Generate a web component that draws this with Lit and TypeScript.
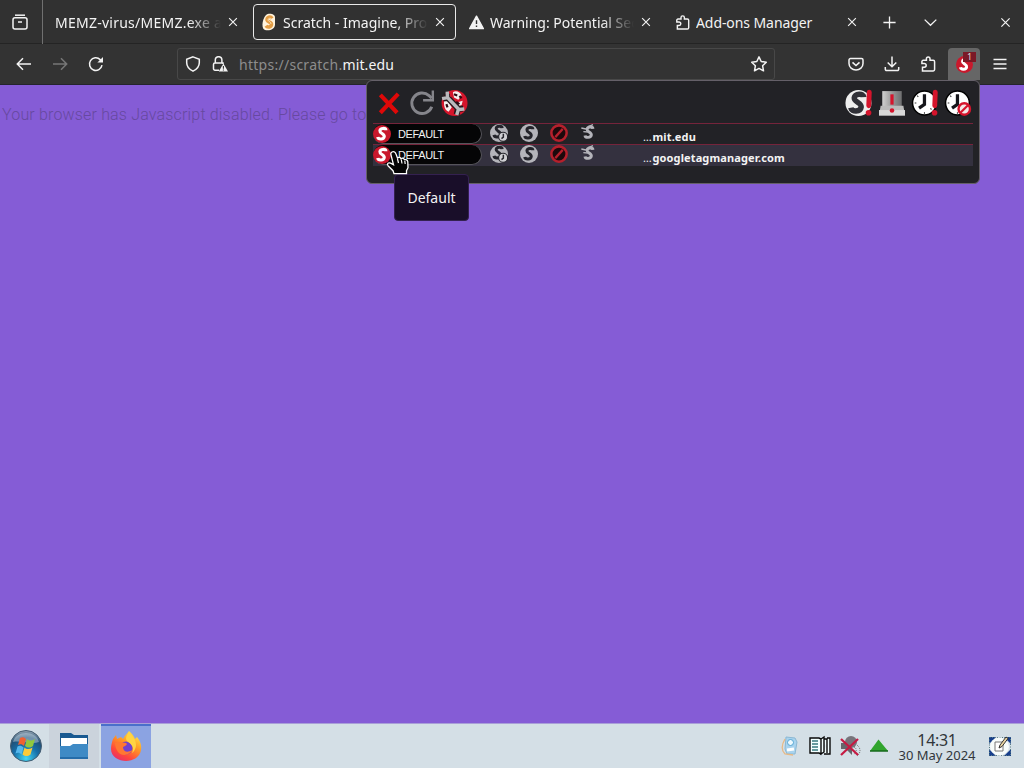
import { LitElement, html, svg, css } from "lit";
import { customElement, property } from "lit/decorators.js";
import { classMap } from "lit/directives/class-map.js";

// snake-like curve shared by all the script permission icons
const snake = "M17.2 7C17 3.600 9.800 3.800 9.200 7.600C8.700 11.200 15.600 11.500 15 15.500C14.400 19.600 7 19.800 6.300 16";

const icons = {
  close: svg`<path d="M3.6 3.6l8.8 8.8M12.4 3.6l-8.8 8.8" stroke-width="1.3" />`,
  plus: svg`<path d="M8 1.500v13M1.500 8h13" stroke-width="1.4" />`,
  chevron: svg`<path d="M1.800 4.900L8 11l6.200-6.100" stroke-width="1.4" />`,
  tabs: svg`<path d="M3 1.2h10" /><rect x="1" y="3.8" width="14" height="11.2" rx="2" /><path d="M6 8h4" />`,
  back: svg`<path d="M15 8H1.5M7 2.3L1.3 8 7 13.7" />`,
  forward: svg`<path d="M1 8h13.5M9 2.3L14.7 8 9 13.7" />`,
  reload: svg`<path d="M14 9.2A6.3 6.3 0 1 1 12.2 3.6L14 5.4" /><path d="M15 1v5.6H9.4z" fill="currentColor" stroke="none" />`,
  shield: svg`<path d="M8 .9l6.3 2.4v3.5c0 3.7-2.6 6.6-6.3 8.4-3.7-1.8-6.3-4.7-6.3-8.4V3.3z" />`,
  lock: svg`<path d="M7 14.2H3a1.500 1.500 0 0 1-1.500-1.500V8.500A1.500 1.500 0 0 1 3 7h8v1M3.300 7V4a3.300 3.300 0 0 1 6.600 0v3" /><path d="M11.4 7.500L16 15.600H6.800z" fill="currentColor" stroke="none" /><path d="M11.4 10v2.700M11.4 13.600v1" stroke="#313131" stroke-width="1.100" />`,
  star: svg`<path d="M8 .9l2.200 4.600 5.100.7-3.700 3.500.9 5.100L8 12.400l-4.500 2.400.9-5.100L.7 6.200l5.100-.7z" stroke-linejoin="round" />`,
  pocket: svg`<path d="M2.500 2.500h11a1.500 1.500 0 0 1 1.500 1.500v3.500a7 6.500 0 0 1-14 0V4a1.500 1.500 0 0 1 1.500-1.500z" /><path d="M4.500 6.300L8 9.500l3.500-3.200" stroke-width="1.600" />`,
  download: svg`<path d="M8 .5v10M3.700 6.500L8 10.800l4.300-4.300M1.300 11v2.200A1.300 1.300 0 0 0 2.600 14.500h10.800a1.300 1.300 0 0 0 1.300-1.300V11" />`,
  puzzle: svg`<path d="M2.500 14.900V11.200h1.800a1.900 1.900 0 0 0 0-3.800H1.900V5.600A1.300 1.300 0 0 1 3.200 4.300H6.400V2.700a1.800 1.800 0 0 1 3.600 0v1.600h3.200A1.400 1.400 0 0 1 14.600 5.700v7.800a1.400 1.400 0 0 1-1.400 1.400z" />`,
  menu: svg`<path d="M1.500 3.500h13M1.500 8h13M1.500 12.500h13" />`,
  warning: svg`<path d="M8 1.200L15.300 14.500H.7z" fill="currentColor" stroke-width="1.500" stroke-linejoin="round" /><path d="M8 5.500v4M8 11.200v1.500" stroke="#313131" stroke-width="1.500" />`,
};

const icon = (name: keyof typeof icons, extra = "") => html`
  <svg class="icon ${extra}" viewBox="0 0 16 16" fill="none" stroke="currentColor" stroke-width="1.5">
    ${icons[name]}
  </svg>
`;

const bang = svg`<path d="M21.500 2L21 14.500" stroke="#d5142c" stroke-width="4.500" stroke-linecap="round" /><circle cx="20.800" cy="21" r="2.600" fill="#d5142c" />`;
const clock = svg`<circle cx="11.500" cy="12" r="11" fill="#fff" stroke="#000" stroke-width="1.400" /><path d="M11.500 4v9.200l-5 3.500" stroke="#15151a" stroke-width="3" /><path d="M2.500 12h1.500M11.500 20.500v1.500M4.800 5.300l1 1M17 17l1 1" stroke="#333" />`;

const tools = {
  close: svg`<path d="M4 4.500L19.500 21M20.500 3.500L4 21" stroke="#df0808" stroke-width="3.800" />`,
  reload: svg`<path d="M21 15.500A9.500 9.500 0 1 1 18.500 5.200L21 7.500" stroke="#85858b" stroke-width="2.700" /><path d="M22 .5v9h-9" stroke="#85858b" stroke-width="2.200" />`,
  options: svg`
    <circle cx="12.500" cy="12" r="12" fill="#d5152b" />
    <path d="M11 2c3-2 7 0 8 3l-3 4-4-2zM3 9l3 1 4 6-3 4c-3-1-5-5-4-11zM16 11l4-1-1 4-3 1z" fill="#f5eeee" />
    <path d="M12 4l3 1M17 5.500l2 2M5 13l1 3M14 11l3 2" stroke="#2d0810" stroke-width="2" />
    <path d="M5.500 3.500v4l-3.500.5M7 8L16.500 18M14.500 22.500l1-5 5-.5" stroke="#25191d" stroke-width="5.500" />
    <path d="M5.800 1.500l.2 5.500-5 1M6.500 7.500L17 18.500M14.500 23l1.500-5 5.500-.5" stroke="#b9b9bc" stroke-width="3.200" />`,
  allowAll: svg`<circle cx="11.500" cy="12" r="12" fill="#eee" /><path d=${snake} transform="translate(-2.500 -1.200) scale(1.100)" stroke="#303037" stroke-width="4.600" />${bang}`,
  restricted: svg`
    <defs>
      <linearGradient id="steel"><stop offset="0" stop-color="#d0d0d0" /><stop offset=".5" stop-color="#999" /><stop offset="1" stop-color="#6e6e70" /></linearGradient>
    </defs>
    <path d="M3 1h18v15H3z" fill="url(#steel)" />
    <path d="M1.500 14.500H22.500L24 23.500H0z" fill="#bbb" /><path d="M0 18.500h24v5H0z" fill="#d8d8d8" />
    <path d="M12 4v9.500" stroke="#d5142c" stroke-width="3" /><circle cx="12" cy="19" r="2.100" fill="#d5142c" />`,
  tempAll: svg`${clock}${bang}`,
  revoke: svg`${clock}<circle cx="17.800" cy="17.500" r="5.300" fill="#f3e8e8" stroke="#d5142c" stroke-width="2.200" /><path d="M14.200 21l7-7" stroke="#d5142c" stroke-width="2" />`,
};

const presets = {
  fallback: svg`<circle cx="12" cy="12" r="12" fill="#c9182c" /><path d=${snake} stroke="#fff" stroke-width="4.200" />`,
  temp: svg`<circle cx="12" cy="12" r="12" fill="#b4b4ba" /><path d=${snake} transform="translate(-1 -1.500)" stroke="#24242b" stroke-width="4" /><circle cx="17.500" cy="17" r="6" fill="#d0d0d4" stroke="#27272e" stroke-width="1.500" /><path d="M17.800 13v4.500l-2.500 2" stroke="#27272e" stroke-width="2" />`,
  trusted: svg`<circle cx="12" cy="12" r="12" fill="#b4b4ba" /><path d=${snake} stroke="#24242b" stroke-width="4" />`,
  untrusted: svg`<circle cx="12" cy="12" r="10.200" fill="#1d090c" stroke="#b5202c" stroke-width="3.400" /><path d="M7 17.500l10-11" stroke="#b5202c" stroke-width="3" />`,
  custom: svg`<path d=${snake} transform="translate(.5 -.5) scale(1.100)" stroke="#b4b4ba" stroke-width="4" /><path d="M2 6l7 1.500M5 11.500l7 .5M12.500 4l7-3" stroke="#b4b4ba" stroke-width="2" />`,
};

const glyph = (shape: unknown, cls: string) => html`
  <svg class=${cls} viewBox="0 0 24 24" fill="none">${shape}</svg>
`;

@customElement("browser-tab")
export class BrowserTab extends LitElement {
  @property() label = "";
  @property({ reflect: true }) kind = "page";
  @property({ type: Boolean, reflect: true }) active = false;

  static styles = css`
    :host {
      display: block;
      padding: 4px 2px;
      min-width: 0;
    }

    :host([kind="page"]) {
      letter-spacing: 0.25px;
    }

    :host([kind="puzzle"]) {
      letter-spacing: -0.08px;
    }

    .tab {
      box-sizing: border-box;
      height: 36px;
      display: flex;
      align-items: center;
      padding: 0 8px;
      border: 1px solid transparent;
      border-radius: 4px;
    }

    :host([kind="page"]) .tab {
      padding-left: 9px;
    }

    .tab.active {
      border-color: #e9e9e9;
    }

    .icon {
      width: 15px;
      height: 15px;
      flex: none;
      margin-right: 6px;
    }

    .icon.x {
      width: 14px;
      height: 14px;
      margin: 0;
    }

    .favicon {
      width: 14px;
      height: 18px;
      flex: none;
      margin-right: 7px;
    }

    .label {
      flex: 1;
      min-width: 0;
      overflow: hidden;
      white-space: nowrap;
      line-height: 22px;
      margin: 2px 5px 0 0;
    }

    .label.fade {
      mask-image: linear-gradient(to left, transparent, black 32px);
    }
  `;

  private renderFavicon() {
    if (this.kind === "warning") return icon("warning");
    if (this.kind === "puzzle") return icon("puzzle");
    if (this.kind === "scratch") {
      return html`<svg class="favicon" viewBox="0 0 14 18" fill="none">
        <path d="M4 2C6 0 13 0 13 4.500v7C13 16 8 18 3 17c-4-1-3-11 1-15z" fill="#fff3dc" />
        <path d="M10 5.500C8.500 3 5 4 5 7c.3 2.500 4.500 1.500 4.500 4.300 0 2.700-4 3.700-5.500 1.500" stroke="#e39d45" stroke-width="3.600" />
        <path d="M9.500 6C8 4.500 5.800 5.500 6 7.200c.5 1.300 3 1.500 3 3.800" stroke="#fbe0b5" />
      </svg>`;
    }
    return null;
  }

  render() {
    return html`
      <div class=${classMap({ tab: true, active: this.active })}>
        ${this.renderFavicon()}
        <span class=${classMap({ label: true, fade: this.kind !== "puzzle" })}>${this.label}</span>
        ${icon("close", "x")}
      </div>
    `;
  }
}

@customElement("app-root")
export class AppRoot extends LitElement {
  static styles = css`
    :host {
      display: flex;
      flex-direction: column;
      position: relative;
      width: 1024px;
      height: 768px;
      overflow: hidden;
      background: #855cd6;
      color: #f3f3f3;
      font: 14px "Noto Sans", sans-serif;
    }

    svg {
      display: block;
      flex: none;
    }

    .icon {
      width: 16px;
      height: 16px;
    }

    .tabs {
      box-sizing: border-box;
      height: 44px;
      display: grid;
      grid-template-columns: 43px 208px 207px 206px 206px 39px 42px 1fr;
      background: #313131;
      border-bottom: 1px solid #242424;
    }

    .cell {
      display: flex;
      align-items: center;
      justify-content: center;
    }

    .cell.view {
      border-right: 1px solid #707070;
      padding-right: 2px;
    }

    .cell.quit {
      justify-content: flex-end;
      padding-right: 11px;
    }

    .cell .icon {
      width: 15px;
      height: 15px;
    }

    .cell.view .icon {
      width: 16px;
      height: 16px;
    }

    .nav {
      box-sizing: border-box;
      height: 41px;
      display: flex;
      align-items: center;
      padding: 0 16px;
      background: #333;
      border-bottom: 1px solid #24242e;
    }

    .history {
      display: flex;
      gap: 20px;
      width: 161px;
      flex: none;
    }

    .dim {
      color: #777;
    }

    .address {
      box-sizing: border-box;
      width: 598px;
      height: 32px;
      flex: none;
      display: flex;
      align-items: center;
      gap: 11px;
      padding: 0 7px;
      border: 1px solid #484848;
      border-radius: 3px;
    }

    .url {
      flex: 1;
      color: #8d8d8d;
      letter-spacing: 0.27px;
      padding-top: 1px;
    }

    .url b {
      font-weight: 400;
      color: #f5f5f5;
      letter-spacing: 0.1px;
    }

    .actions {
      display: flex;
      align-items: center;
      gap: 20px;
      margin-left: 73px;
    }

    .extension {
      position: relative;
      width: 32px;
      height: 32px;
      margin: 0 -8px;
      display: flex;
      align-items: center;
      justify-content: center;
      background: #666;
      border-radius: 4px 4px 0 0;
    }

    .extension svg {
      width: 17px;
      height: 17px;
    }

    .count {
      position: absolute;
      top: 4px;
      right: 4px;
      width: 13px;
      height: 10px;
      background: #7b1826;
      color: #ddd;
      font-size: 9px;
      line-height: 10px;
      text-align: center;
    }

    .page {
      flex: 1;
      padding: 19px 2px;
      color: #67499f;
      font: 300 16px/22px Roboto, sans-serif;
      letter-spacing: 0.17px;
    }

    .popup {
      position: absolute;
      box-sizing: border-box;
      left: 366px;
      top: 80px;
      width: 614px;
      height: 104px;
      padding: 8px 6px;
      background: #222226;
      border: 1px solid #656069;
      border-radius: 6px;
    }

    .bar {
      display: flex;
      align-items: center;
      height: 28px;
      padding: 0 2px 0 3px;
      margin-bottom: 6px;
    }

    .bar .spacer {
      flex: 1;
    }

    .tool {
      width: 26px;
      height: 26px;
      margin-right: 7px;
      overflow: visible;
    }

    .tool.wrench {
      margin-left: -1px;
    }

    .tool:last-child {
      margin-right: 0;
    }

    .site {
      box-sizing: border-box;
      height: 21px;
      display: flex;
      align-items: flex-start;
      border-top: 1px solid #75243b;
    }

    .site.lit {
      background: #34313f;
      height: 22px;
    }

    .preset {
      box-sizing: border-box;
      width: 109px;
      height: 20px;
      display: flex;
      align-items: center;
      gap: 7px;
      background: #050506;
      border: 1px solid #55545a;
      border-width: 0 1px 1px 0;
      border-radius: 10px;
      margin-right: 8px;
      font: 11px "Liberation Sans", sans-serif;
      letter-spacing: -0.4px;
    }

    .preset svg {
      width: 18px;
      height: 18px;
    }

    .choice {
      width: 18px;
      height: 18px;
      margin-right: 12px;
    }

    .choice.small {
      width: 16px;
      height: 16px;
      margin-right: 47px;
    }

    .domain {
      font-size: 11px;
      line-height: 18px;
      font-weight: 700;
      padding-top: 4px;
      letter-spacing: 0.12px;
    }

    .domain span {
      font-weight: 400;
      letter-spacing: 0.8px;
    }

    .tooltip {
      position: absolute;
      box-sizing: border-box;
      left: 394px;
      top: 174px;
      width: 75px;
      height: 47px;
      border: 1px solid #342150;
      border-radius: 4px;
      background: #190e29;
      line-height: 46px;
      text-align: center;
    }

    .cursor {
      position: absolute;
      left: 386px;
      top: 150px;
      width: 24px;
      height: 25px;
    }

    .taskbar {
      box-sizing: border-box;
      height: 45px;
      display: flex;
      align-items: center;
      background: #d4dfe6;
      color: #31363b;
      border-top: 1px solid #a99fd8;
    }

    .task {
      width: 50px;
      height: 44px;
      display: flex;
      align-items: center;
      justify-content: center;
    }

    .task svg {
      width: 32px;
      height: 32px;
    }

    .task.start {
      padding-left: 2px;
      width: 47px;
    }

    .task.open {
      background: #cbd3dc;
      margin-right: 2px;
    }

    .task.active {
      box-sizing: border-box;
      background: #8ba3e2;
      border-top: 2px solid #4a70cb;
    }

    .tray {
      flex: 1;
      display: flex;
      align-items: center;
      justify-content: flex-end;
      gap: 8px;
      padding-right: 12px;
    }

    .tray svg {
      width: 22px;
      height: 22px;
    }

    .clock {
      width: 78px;
      margin-left: -1px;
      padding-top: 1px;
      text-align: center;
      font-size: 13px;
      line-height: 14px;
      white-space: nowrap;
    }

    .clock strong {
      display: block;
      font-size: 16px;
      font-weight: 400;
      line-height: 16px;
      letter-spacing: -0.3px;
    }

    .tray .edit {
      width: 24px;
      height: 24px;
      margin-left: 4px;
    }
  `;

  private renderSite(domain: string, lit = false) {
    return html`
      <div class=${classMap({ site: true, lit })}>
        <div class="preset">${glyph(presets.fallback, "")}<span>DEFAULT</span></div>
        ${glyph(presets.temp, "choice")} ${glyph(presets.trusted, "choice")}
        ${glyph(presets.untrusted, "choice")} ${glyph(presets.custom, "choice small")}
        <div class="domain"><span>…</span>${domain}</div>
      </div>
    `;
  }

  private renderPopup() {
    return html`
      <div class="popup">
        <div class="bar">
          ${glyph(tools.close, "tool")} ${glyph(tools.reload, "tool")}
          ${glyph(tools.options, "tool wrench")}
          <span class="spacer"></span>
          ${glyph(tools.allowAll, "tool")} ${glyph(tools.restricted, "tool")}
          ${glyph(tools.tempAll, "tool")} ${glyph(tools.revoke, "tool")}
        </div>
        ${this.renderSite("mit.edu")} ${this.renderSite("googletagmanager.com", true)}
      </div>
      <div class="tooltip">Default</div>
      <svg class="cursor" viewBox="0 0 24 25">
        <path
          d="M6 2c2-1 3.500.5 4 2l1.500 4c1-1 3-.8 3.500.7 1.500-1 3-.3 3.500 1 1.500-.5 3 .3 3.300 2l.2 6-1.500 3v3H8l-1-3-5-5c-1.500-2 .5-3.500 2.500-2.500l3 1.500L5 5c-.5-1.500 0-2.500 1-3z"
          fill="#050505"
          stroke="#fff"
          stroke-width="1.300"
        />
        <path d="M11.500 9l1 4M15.300 9.500l.7 4M18.800 11l.4 3" stroke="#fff" stroke-width="1.200" />
      </svg>
    `;
  }

  private renderTaskbar() {
    return html`
      <div class="taskbar">
        <div class="task start">
          <svg viewBox="0 0 32 32">
            <defs>
              <radialGradient id="orb" cx=".5" cy=".9" r=".9">
                <stop offset="0" stop-color="#43d8f4" />
                <stop offset=".45" stop-color="#176fa9" />
                <stop offset=".75" stop-color="#205078" />
                <stop offset="1" stop-color="#9ba9b5" />
              </radialGradient>
            </defs>
            <circle cx="16" cy="16" r="15.500" fill="url(#orb)" stroke="#455c70" />
            <path d="M3 12C6 0 26 0 29 12c-8 3-18-2-26 0z" fill="#d7e2e8" opacity=".45" />
            <path d="M10 8c2-1 4-1 6 1l-2 7c-2-2-4-2-6-1z" fill="#ef6232" />
            <path d="M17 9c2 2 5 2 8 0l-2 7c-3 2-5 2-8 0z" fill="#91c83f" />
            <path d="M7.500 16.500c2-1 4-1 6 1l-2 7c-2-2-4-2-6-1z" fill="#55b7ed" />
            <path d="M14.500 17.500c2 2 5 2 8 0l-2 7c-3 2-5 2-8 0z" fill="#fccb3b" />
          </svg>
        </div>
        <div class="task open">
          <svg viewBox="0 0 32 32">
            <path d="M2 3h11l3 2h14v24H2z" fill="#195991" />
            <path d="M3 8h26v13H3z" fill="#fff" />
            <path d="M2 16h10l3-2h15v15H2z" fill="#3e8ac5" />
            <path d="M2 27h28v2H2z" fill="#246ca9" />
          </svg>
        </div>
        <div class="task active">
          <svg viewBox="0 0 32 32">
            <defs>
              <linearGradient id="fox" x1=".8" y1="0" x2=".2" y2="1">
                <stop offset="0" stop-color="#fff04b" />
                <stop offset=".4" stop-color="#ff9a24" />
                <stop offset=".75" stop-color="#ff473c" />
                <stop offset="1" stop-color="#e42b71" />
              </linearGradient>
            </defs>
            <path
              d="M3 8l3-4 1 4 4-2 2 2c2-4 4-5 6-8 3 3 5 5 6 8l2-2c3 4 5 8 4 13-1 7-8 11-15 11S1 26 1 18c0-4 1-7 2-10z"
              fill="url(#fox)"
            />
            <circle cx="16" cy="17" r="6.500" fill="#7041cf" />
            <path d="M5 12c4-2 8 0 11 0 2 1 0 3-3 4 0 5 5 6 9 3-2 5-10 7-14 2-2-3-3-6-3-9z" fill="#ff7732" />
            <path d="M19 1c3 4 7 7 7 13 0 3-2 7-4 8 3-6-1-9-5-12-2-3 0-6 2-9z" fill="#ffd443" />
          </svg>
        </div>
        <div class="tray">
          <svg viewBox="0 0 22 22">
            <path d="M7 2l9 1 2 4-2 12H8L6 14z" fill="#a9d3ee" stroke="#8bb8d3" />
            <path d="M6 4c-3 5-4 11 0 15l8 1" fill="none" stroke="#e7b985" stroke-width="1.300" />
            <circle cx="11.500" cy="7.500" r="3" fill="#eef9ff" stroke="#54a6d2" />
            <path d="M8 15l7-1" stroke="#fff" stroke-width="3" />
          </svg>
          <svg viewBox="0 0 22 22" fill="#f3ffff" stroke="#080808" stroke-width="1.400">
            <path d="M1 3h9l2 1V19l-2-1H1zM12 4l3-2v15l-3 2zM15 4h3v14M18 3h3v16h-6" />
            <path d="M3 6h6M3 9h6M3 12h6M3 15h6" stroke="#397b80" />
          </svg>
          <svg viewBox="0 0 22 22" fill="none">
            <path d="M2 8h5l6-6v18l-6-6H2z" fill="#66666c" />
            <circle cx="12" cy="7" r="6" fill="#77747b" />
            <path d="M15 12c3 1 3 5 0 7M18 10c4 3 4 8 0 11" stroke="#777" stroke-dasharray="1 1" />
            <path d="M2 4l17 16M19 4L2 20" stroke="#c51b43" stroke-width="2.300" />
          </svg>
          <svg viewBox="0 0 22 22">
            <path d="M9.500 4.500L19 16H1z" fill="#31a52e" />
            <path d="M1 16h18" stroke="#176a1c" stroke-width="1.500" />
          </svg>
          <div class="clock"><strong>14:31</strong>30 May 2024</div>
          <svg class="edit" viewBox="0 0 24 24" fill="none">
            <path d="M1 3h7L1 10zM16 3h7v7zM1 15v7h7zM23 15v7h-7z" fill="#173f8c" />
            <path d="M1.500 3.500h21v18h-21z" stroke="#5a7d83" stroke-dasharray="1 1.500" />
            <ellipse cx="11.500" cy="12.500" rx="9.500" ry="9" fill="#f7fcfb" />
            <path d="M7 8h8v9H7z" fill="#fff" stroke="#777" />
            <path d="M11 14l1-3 6-8 2 1.500-6 8z" fill="#ead5a2" stroke="#333" />
          </svg>
        </div>
      </div>
    `;
  }

  render() {
    return html`
      <div class="tabs">
        <div class="cell view">${icon("tabs")}</div>
        <browser-tab label="MEMZ-virus/MEMZ.exe at master"></browser-tab>
        <browser-tab kind="scratch" label="Scratch - Imagine, Program, Share" active></browser-tab>
        <browser-tab kind="warning" label="Warning: Potential Security Risk"></browser-tab>
        <browser-tab kind="puzzle" label="Add-ons Manager"></browser-tab>
        <div class="cell">${icon("plus")}</div>
        <div class="cell">${icon("chevron")}</div>
        <div class="cell quit">${icon("close")}</div>
      </div>
      <div class="nav">
        <div class="history">${icon("back")} ${icon("forward", "dim")} ${icon("reload")}</div>
        <div class="address">
          ${icon("shield")} ${icon("lock")}
          <span class="url">https://scratch.<b>mit.edu</b></span>
          ${icon("star")}
        </div>
        <div class="actions">
          ${icon("pocket")} ${icon("download")} ${icon("puzzle")}
          <div class="extension">${glyph(presets.fallback, "")}<span class="count">1</span></div>
          ${icon("menu")}
        </div>
      </div>
      <div class="page">Your browser has Javascript disabled. Please go to</div>
      ${this.renderTaskbar()} ${this.renderPopup()}
    `;
  }
}
